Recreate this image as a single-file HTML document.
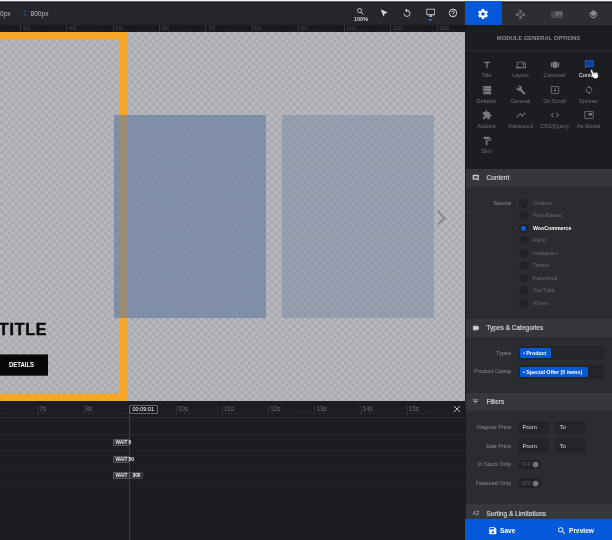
<!DOCTYPE html>
<html lang="en">
<head>
<meta charset="utf-8">
<title>Module General Options</title>
<style>
*{box-sizing:border-box;margin:0;padding:0}
html,body{width:612px;height:540px;overflow:hidden;background:#1c1d21;font-family:"Liberation Sans",sans-serif;}
body{position:relative}
.abs{position:absolute}
#topline{left:0;top:0;width:612px;height:1px;background:#f4f4f5}
#topline2{left:0;top:1px;width:612px;height:2px;background:linear-gradient(#6c6d70 0,#6c6d70 50%,#17181b 50%,#17181b 100%)}
#toolbar{left:0;top:2px;width:465px;height:23px;background:#25262b}
#tabs{left:465px;top:2px;width:147px;height:23px;background:#2c2e34}
#tab1{left:-0.5px;top:0;width:37.5px;height:22.5px;background:#0558d8}
#ruler{left:0;top:25px;width:465px;height:7px;background:#18191d;overflow:hidden}
#canvas{left:0;top:31.5px;width:465px;height:369.5px;overflow:hidden;
 background:#b7b9be}
#timeline{left:0;top:401px;width:465px;height:139px;background:#1c1d21;overflow:hidden}
#panel{left:465px;top:25px;width:147px;height:494px;background:#1c1d21;overflow:hidden}
#bottombar{left:465px;top:519px;width:147px;height:21px;background:#0558d8}
.tbtxt{font-size:6.600px;color:#bdbec1;line-height:8px;white-space:nowrap}
.rl{position:absolute;top:0;height:7px;border-left:1px solid #34363b;font-size:4.5px;line-height:7px;color:#4c4e53;padding-left:1.5px}
.sec{position:absolute;left:0;width:147px;height:18.5px;background:#35373c}
.sec span{position:absolute;left:21.5px;top:4.5px;font-size:6.5px;line-height:9px;color:#cfd0d2;white-space:nowrap;-webkit-text-stroke:0.2px #cfd0d2}
.body{position:absolute;left:0;width:147px;background:#2a2c30}
.lbl{position:absolute;font-size:5.6px;line-height:7px;color:#74767b;white-space:nowrap;text-align:right;right:101px;overflow:hidden;-webkit-text-stroke:0.15px #74767b}
.gi{position:absolute;width:34px;text-align:center;font-size:5.5px;line-height:7px;color:#707277;white-space:nowrap}
.radio{position:absolute;left:54px;width:9px;height:9px;border-radius:50%;background:#202226}
.rt{position:absolute;left:68px;font-size:5.6px;line-height:7px;color:#6a6c71;white-space:nowrap}
.field{position:absolute;background:#232529;border-radius:1.5px}
.tag{position:absolute;background:#0558d8;border-radius:1px;color:#fff;font-size:5.3px;font-weight:bold;line-height:10px;white-space:nowrap;padding-left:3px}
.ftxt{position:absolute;font-size:6.2px;line-height:7px;color:#dedfe1}
.tl-line{position:absolute;left:0;width:465px;height:1px;background:#25262b}
.tl-lab{position:absolute;top:4px;font-size:6.3px;line-height:7px;color:#6e7075}
.tl-tick{position:absolute;top:5px;width:1px;height:9px;background:#303237}
.wait{position:absolute;left:113px;height:7px;width:16.5px;background:#2e3035;border:1px solid #565960;border-radius:1px;color:#e8e8ea;font-weight:bold;font-size:4.8px;line-height:5px;padding-left:1.5px;white-space:nowrap}
.waitn{position:absolute;color:#fff;font-weight:bold;font-size:4.8px;line-height:7px}
</style>
</head>
<body>
<div id="root" style="position:absolute;left:0;top:0;width:612px;height:540px;will-change:transform">
<div class="abs" id="toolbar">
  <div class="abs tbtxt" style="left:0;top:7.5px">0px</div>
  <svg class="abs" style="left:22.500px;top:7px" width="4" height="8" viewBox="0 0 4 8"><path d="M0.600 2.900 L2 1.400 L3.400 2.900 M0.600 5.100 L2 6.600 L3.400 5.100" fill="none" stroke="#2a5fc4" stroke-width="0.900"/></svg>
  <div class="abs tbtxt" style="left:30.5px;top:7.5px">800px</div>
  <!-- zoom -->
  <svg class="abs" style="left:356px;top:5px" width="9" height="9" viewBox="0 0 24 24"><path fill="#d6d7d9" d="M15.5 14h-.79l-.28-.27A6.471 6.471 0 0 0 16 9.5 6.5 6.5 0 1 0 9.500 16c1.610 0 3.090-.590 4.230-1.570l.270.280v.790l5 4.990L20.490 19l-4.990-5zm-6 0C7.010 14 5 11.990 5 9.500S7.010 5 9.500 5 14 7.010 14 9.500 11.990 14 9.500 14z"/></svg>
  <div class="abs" style="left:352px;top:13.5px;width:18px;text-align:center;font-size:5.500px;line-height:6px;font-weight:bold;color:#d6d7d9">100%</div>
  <!-- cursor -->
  <svg class="abs" style="left:379px;top:6px" width="10" height="10" viewBox="0 0 24 24"><path fill="#d6d7d9" d="M4 3 L21 11 L13.500 13.500 L11 21 Z"/></svg>
  <!-- undo -->
  <svg class="abs" style="left:402px;top:5.500px" width="10" height="10" viewBox="0 0 24 24"><path fill="#d6d7d9" d="M12 5V1L7 6l5 5V7c3.310 0 6 2.690 6 6s-2.690 6-6 6-6-2.690-6-6H4c0 4.420 3.580 8 8 8s8-3.580 8-8-3.580-8-8-8z"/></svg>
  <!-- monitor -->
  <svg class="abs" style="left:425.500px;top:6px" width="9.500" height="9.500" viewBox="0 0 24 24"><path fill="#d6d7d9" d="M21 2H3c-1.100 0-2 .900-2 2v12c0 1.100.900 2 2 2h7v2H8v2h8v-2h-2v-2h7c1.100 0 2-.900 2-2V4c0-1.100-.900-2-2-2zm0 14H3V4h18v12z"/></svg>
  <svg class="abs" style="left:428.200px;top:17.300px" width="4.200" height="2.600" viewBox="0 0 5 3"><path d="M0 0H5L2.500 3Z" fill="#2f68d6"/></svg>
  <!-- help -->
  <svg class="abs" style="left:448px;top:6px" width="10" height="10" viewBox="0 0 24 24"><path fill="#d6d7d9" d="M11 18h2v-2h-2v2zm1-16C6.480 2 2 6.480 2 12s4.480 10 10 10 10-4.480 10-10S17.520 2 12 2zm0 18c-4.410 0-8-3.590-8-8s3.590-8 8-8 8 3.590 8 8-3.590 8-8 8zm0-14c-2.210 0-4 1.790-4 4h2c0-1.100.900-2 2-2s2 .900 2 2c0 2-3 1.750-3 5h2c0-2.250 3-2.500 3-5 0-2.210-1.790-4-4-4z"/></svg>
</div>
<div class="abs" id="tabs">
  <div class="abs" id="tab1"></div>
  <!-- gear -->
  <svg class="abs" style="left:12.400px;top:6.300px" width="12" height="12" viewBox="0 0 24 24"><path fill="#fff" d="M19.430 12.980c.040-.320.070-.640.070-.980s-.030-.660-.070-.980l2.110-1.650c.190-.150.240-.420.120-.640l-2-3.460c-.120-.220-.390-.300-.610-.220l-2.490 1c-.520-.400-1.080-.730-1.690-.980l-.380-2.650C14.460 2.180 14.250 2 14 2h-4c-.250 0-.460.180-.490.420l-.380 2.650c-.610.250-1.170.590-1.690.980l-2.490-1c-.230-.090-.490 0-.610.220l-2 3.460c-.130.220-.070.490.120.640l2.110 1.650c-.040.320-.070.650-.070.980s.030.660.070.980l-2.110 1.650c-.190.150-.240.420-.120.640l2 3.460c.120.220.390.300.610.220l2.490-1c.520.400 1.080.730 1.690.980l.380 2.650c.030.240.240.420.490.420h4c.250 0 .460-.180.490-.420l.380-2.650c.610-.250 1.170-.590 1.690-.980l2.490 1c.230.090.490 0 .610-.220l2-3.460c.120-.220.070-.490-.120-.640l-2.110-1.650zM12 15.500c-1.930 0-3.500-1.570-3.500-3.500s1.570-3.500 3.500-3.500 3.500 1.570 3.500 3.500-1.570 3.500-3.500 3.500z"/></svg>
  <!-- move / gamepad -->
  <svg class="abs" style="left:50px;top:7px" width="11" height="11" viewBox="0 0 24 24"><path fill="#66686d" d="M15 7.500V2H9v5.500l3 3 3-3zM7.500 9H2v6h5.500l3-3-3-3zM9 16.500V22h6v-5.500l-3-3-3 3zM16.500 9l-3 3 3 3H22V9h-5.500z"/></svg>
  <!-- slides -->
  <svg class="abs" style="left:86px;top:7px" width="12" height="11" viewBox="0 0 26 24"><path fill="#66686d" d="M1 5h2v14H1zm4 0h2v14H5zm4 0h16v14H9zM11 17h12l-3.500-5-3 4-2-2.500z" fill-rule="evenodd"/></svg>
  <!-- layers -->
  <svg class="abs" style="left:123px;top:7px" width="11" height="11" viewBox="0 0 24 24"><path fill="#8b8d92" d="M11.990 18.540l-7.370-5.730L3 14.070l9 7 9-7-1.630-1.270-7.380 5.740zM12 16l7.360-5.730L21 9l-9-7-9 7 1.630 1.270L12 16z"/></svg>
</div>
<div class="abs" id="ruler">
<div class="rl" style="left:20.0px">300</div>
<div class="rl" style="left:66.3px">400</div>
<div class="rl" style="left:112.6px">500</div>
<div class="rl" style="left:158.9px">600</div>
<div class="rl" style="left:205.2px">700</div>
<div class="rl" style="left:251.5px">800</div>
<div class="rl" style="left:297.8px">900</div>
<div class="rl" style="left:344.1px">1000</div>
<div class="rl" style="left:390.4px">1100</div>
<div class="rl" style="left:436.7px">1200</div>
<svg class="abs" style="left:0;top:0" width="465" height="7"><path d="M-2.65 5V7M1.98 5V7M6.61 5V7M11.24 5V7M15.87 5V7M25.13 5V7M29.76 5V7M34.39 5V7M39.02 5V7M43.65 5V7M48.28 5V7M52.91 5V7M57.54 5V7M62.17 5V7M71.43 5V7M76.06 5V7M80.69 5V7M85.32 5V7M89.95 5V7M94.58 5V7M99.21 5V7M103.84 5V7M108.47 5V7M117.73 5V7M122.36 5V7M126.99 5V7M131.62 5V7M136.25 5V7M140.88 5V7M145.51 5V7M150.14 5V7M154.77 5V7M164.03 5V7M168.66 5V7M173.29 5V7M177.92 5V7M182.55 5V7M187.18 5V7M191.81 5V7M196.44 5V7M201.07 5V7M210.33 5V7M214.96 5V7M219.59 5V7M224.22 5V7M228.85 5V7M233.48 5V7M238.11 5V7M242.74 5V7M247.37 5V7M256.63 5V7M261.26 5V7M265.89 5V7M270.52 5V7M275.15 5V7M279.78 5V7M284.41 5V7M289.04 5V7M293.67 5V7M302.93 5V7M307.56 5V7M312.19 5V7M316.82 5V7M321.45 5V7M326.08 5V7M330.71 5V7M335.34 5V7M339.97 5V7M349.23 5V7M353.86 5V7M358.49 5V7M363.12 5V7M367.75 5V7M372.38 5V7M377.01 5V7M381.64 5V7M386.27 5V7M395.53 5V7M400.16 5V7M404.79 5V7M409.42 5V7M414.05 5V7M418.68 5V7M423.31 5V7M427.94 5V7M432.57 5V7M441.83 5V7M446.46 5V7M451.09 5V7M455.72 5V7M460.35 5V7M464.98 5V7M469.61 5V7M474.24 5V7M478.87 5V7M488.13 5V7M492.76 5V7M497.39 5V7M502.02 5V7M506.65 5V7M511.28 5V7M515.91 5V7M520.54 5V7M525.17 5V7" stroke="#2e3035" stroke-width="0.8" fill="none"/></svg>
</div>
<div class="abs" id="canvas">
  <svg class="abs" style="left:0;top:0" width="465" height="370"><defs><pattern id="ck" width="7.4" height="7.4" patternUnits="userSpaceOnUse"><rect x="0" y="0" width="3.7" height="3.7" fill="#a9abb0"/><rect x="3.7" y="3.7" width="3.7" height="3.7" fill="#a9abb0"/></pattern></defs><rect x="0" y="0" width="465" height="370" fill="url(#ck)"/></svg>
  <!-- orange frame -->
  <div class="abs" style="left:-20px;top:-1px;width:148px;height:371.500px;border:1px solid rgba(246,165,36,.4)"></div>
  <div class="abs" style="left:-20px;top:7px;width:140px;height:355.500px;border:1.500px solid rgba(246,165,36,.4)"></div>
  <div class="abs" style="left:-20px;top:0;width:147px;height:369.500px;border:7px solid #f6a524"></div>
  <div class="abs" style="left:114px;top:83.500px;width:152px;height:202.500px;background:rgba(113,132,164,.76)"></div>
  <div class="abs" style="left:120px;top:83.500px;width:7px;height:202.500px;background:#9a8b73"></div>
  <div class="abs" style="left:282px;top:83.500px;width:152px;height:202.500px;background:rgba(115,132,162,.45)"></div>
  <svg class="abs" style="left:436px;top:178px" width="11" height="16" viewBox="0 0 11 16"><path d="M1.600 1.200 L8.600 7.900 L1.600 14.600" fill="none" stroke="#808287" stroke-width="1.700"/></svg>
  <div class="abs" style="left:-1.200px;top:288px;font-size:16px;line-height:20px;font-weight:bold;color:#0a0a0a;letter-spacing:0.800px;-webkit-text-stroke:0.500px #0a0a0a">TITLE</div>
  <svg class="abs" style="left:0;top:322.500px" width="50" height="24"><rect x="-2" y="0.400" width="50" height="21.300" fill="#070707"/></svg>
  <div class="abs" style="left:0;top:322.500px;width:48px;height:20.500px;color:#fff;font-size:6px;font-weight:bold;line-height:20.500px;text-align:center;padding-right:5px;transform:scale(1,1.3);transform-origin:50% 50%">DETAILS</div>
</div>
<div class="abs" id="timeline">
<svg class="abs" style="left:0;top:0" width="465" height="16"><path d="M-8.65 11.5V13M-4.04 11.5V13M0.58 11.5V13M5.20 11.5V13M9.81 11.5V13M14.42 11.5V13M19.04 11.5V13M23.66 11.5V13M28.27 11.5V13M32.88 11.5V13M37.50 11.5V13M42.12 11.5V13M46.73 11.5V13M51.34 11.5V13M55.96 11.5V13M60.58 11.5V13M65.19 11.5V13M69.81 11.5V13M74.42 11.5V13M79.03 11.5V13M83.65 11.5V13M88.27 11.5V13M92.88 11.5V13M97.50 11.5V13M102.11 11.5V13M106.73 11.5V13M111.34 11.5V13M115.95 11.5V13M120.57 11.5V13M125.19 11.5V13M129.80 11.5V13M134.42 11.5V13M139.03 11.5V13M143.65 11.5V13M148.26 11.5V13M152.88 11.5V13M157.49 11.5V13M162.11 11.5V13M166.72 11.5V13M171.34 11.5V13M175.95 11.5V13M180.56 11.5V13M185.18 11.5V13M189.80 11.5V13M194.41 11.5V13M199.03 11.5V13M203.64 11.5V13M208.25 11.5V13M212.87 11.5V13M217.49 11.5V13M222.10 11.5V13M226.72 11.5V13M231.33 11.5V13M235.95 11.5V13M240.56 11.5V13M245.18 11.5V13M249.79 11.5V13M254.41 11.5V13M259.02 11.5V13M263.63 11.5V13M268.25 11.5V13M272.87 11.5V13M277.48 11.5V13M282.10 11.5V13M286.71 11.5V13M291.33 11.5V13M295.94 11.5V13M300.56 11.5V13M305.17 11.5V13M309.79 11.5V13M314.40 11.5V13M319.01 11.5V13M323.63 11.5V13M328.25 11.5V13M332.86 11.5V13M337.48 11.5V13M342.09 11.5V13M346.71 11.5V13M351.32 11.5V13M355.94 11.5V13M360.55 11.5V13M365.17 11.5V13M369.78 11.5V13M374.40 11.5V13M379.01 11.5V13M383.62 11.5V13M388.24 11.5V13M392.86 11.5V13M397.47 11.5V13M402.09 11.5V13M406.70 11.5V13M411.31 11.5V13M415.93 11.5V13M420.55 11.5V13M425.16 11.5V13M429.78 11.5V13M434.39 11.5V13M439.00 11.5V13M443.62 11.5V13M448.24 11.5V13M452.85 11.5V13M457.47 11.5V13M462.08 11.5V13M466.69 11.5V13M471.31 11.5V13M475.93 11.5V13M480.54 11.5V13M485.16 11.5V13M489.77 11.5V13M494.39 11.5V13" stroke="#3d3f44" stroke-width="0.8" fill="none"/></svg>
<div class="tl-tick" style="left:37.5px"></div><div class="tl-lab" style="left:39.5px">7s</div>
<div class="tl-tick" style="left:83.7px"></div><div class="tl-lab" style="left:85.7px">8s</div>
<div class="tl-tick" style="left:175.9px"></div><div class="tl-lab" style="left:177.9px">10s</div>
<div class="tl-tick" style="left:222.1px"></div><div class="tl-lab" style="left:224.1px">11s</div>
<div class="tl-tick" style="left:268.2px"></div><div class="tl-lab" style="left:270.2px">12s</div>
<div class="tl-tick" style="left:314.4px"></div><div class="tl-lab" style="left:316.4px">13s</div>
<div class="tl-tick" style="left:360.6px"></div><div class="tl-lab" style="left:362.6px">14s</div>
<div class="tl-tick" style="left:406.7px"></div><div class="tl-lab" style="left:408.7px">15s</div>
<div class="tl-line" style="top:16px;background:#2b2c31"></div>
<div class="tl-line" style="top:32.7px"></div>
<div class="tl-line" style="top:49.3px"></div>
<div class="tl-line" style="top:66px"></div>
<div class="tl-line" style="top:82.7px"></div>
<div class="abs" style="left:129px;top:12px;width:1px;height:127px;background:#393b40"></div>
<div class="abs" style="left:129px;top:4px;width:28.500px;height:9px;border:1px solid #63656a;background:#1c1d21;border-radius:1px;color:#fff;font-size:5.500px;line-height:7px;text-align:center">00:09:01</div>
<div class="wait" style="top:38.200px">WAIT</div><div class="waitn" style="left:128.500px;top:38.200px">0</div>
<div class="wait" style="top:54.700px">WAIT</div><div class="waitn" style="left:128.500px;top:54.700px">50</div>
<div class="wait" style="top:71.200px;width:30px;background:#2a2c31;border-color:#44474e"></div><div class="wait" style="top:71.200px">WAIT</div><div class="waitn" style="left:132.500px;top:71.200px">300</div>
<svg class="abs" style="left:453px;top:4px" width="8" height="8" viewBox="0 0 8 8"><path d="M1 1L7 7M7 1L1 7" stroke="#bfc0c3" stroke-width="1" fill="none"/></svg>
</div>
<div class="abs" id="panel">
<div class="abs" style="left:0;top:6px;width:147px;text-align:center;font-size:5.85px;line-height:14px;font-weight:bold;color:#8a8c91">MODULE GENERAL OPTIONS</div>
<div class="abs" style="left:0;top:25px;width:147px;height:1px;background:#2a2b30"></div>
<svg class="abs" style="left:16.5px;top:34.5px" width="10" height="10" viewBox="0 0 24 24"><path fill="#787a7f" d="M5 4v3h5.500v12h3V7H19V4z"/></svg>
<div class="gi" style="left:4.5px;top:47.0px">Title</div>
<svg class="abs" style="left:50.5px;top:34.5px" width="10" height="10" viewBox="0 0 24 24"><path fill="#787a7f" d="M4 6h18V4H4c-1.100 0-2 .900-2 2v11H0v3h14v-3H4V6zm19 2h-6c-.550 0-1 .450-1 1v10c0 .550.450 1 1 1h6c.550 0 1-.450 1-1V9c0-.550-.450-1-1-1zm-1 9h-4v-7h4v7z"/></svg>
<div class="gi" style="left:38.5px;top:47.0px">Layout</div>
<svg class="abs" style="left:84.5px;top:34.5px" width="10" height="10" viewBox="0 0 24 24"><path fill="#787a7f" d="M7 19h10V4H7v15zm-5-2h4V6H2v11zM18 6v11h4V6h-4z"/></svg>
<div class="gi" style="left:72.5px;top:47.0px">Carousel</div>
<svg class="abs" style="left:118.9px;top:33.7px" width="10.6" height="10.6" viewBox="0 0 24 24"><path fill="#0b3f96" d="M3 3h18v14H6l-3 3z"/><path fill="#0e5fe0" d="M20 2H4c-1.100 0-2 .900-2 2v18l4-4h14c1.100 0 2-.900 2-2V4c0-1.100-.900-2-2-2zm0 14H6l-2 2V4h16v12z"/></svg>
<div class="gi" style="left:106.5px;top:47.0px;color:#fff">Content</div>
<svg class="abs" style="left:16.5px;top:60.0px" width="10" height="10" viewBox="0 0 24 24"><path fill="#787a7f" fill-rule="evenodd" d="M3 2.500h18a1 1 0 0 1 1 1v4a1 1 0 0 1-1 1H3a1 1 0 0 1-1-1v-4a1 1 0 0 1 1-1zM4 4.500v2h2.500v-2zM3 9.200h18a1 1 0 0 1 1 1v4a1 1 0 0 1-1 1H3a1 1 0 0 1-1-1v-4a1 1 0 0 1 1-1zM4 11.200v2h2.500v-2zM3 15.900h18a1 1 0 0 1 1 1v4a1 1 0 0 1-1 1H3a1 1 0 0 1-1-1v-4a1 1 0 0 1 1-1zM4 17.900v2h2.500v-2z"/></svg>
<div class="gi" style="left:4.5px;top:72.5px">Defaults</div>
<svg class="abs" style="left:50.5px;top:60.0px" width="10" height="10" viewBox="0 0 24 24"><path fill="#787a7f" d="M22.700 19l-9.100-9.100c.900-2.300.400-5-1.500-6.900-2-2-5-2.400-7.400-1.300L9 6 6 9 1.600 4.700C.400 7.100.900 10.100 2.900 12.100c1.900 1.900 4.600 2.400 6.900 1.500l9.100 9.100c.400.400 1 .400 1.400 0l2.300-2.300c.500-.400.500-1.100.100-1.400z"/></svg>
<div class="gi" style="left:38.5px;top:72.5px">General</div>
<svg class="abs" style="left:84.5px;top:60.0px" width="10" height="10" viewBox="0 0 24 24"><path fill="#787a7f" d="M20 3H4c-1.100 0-2 .900-2 2v14c0 1.100.900 2 2 2h16c1.100 0 2-.900 2-2V5c0-1.100-.900-2-2-2zm0 16H4V5h16v14zM13 7h-2v5H8l4 4 4-4h-3z"/></svg>
<div class="gi" style="left:72.5px;top:72.5px">On Scroll</div>
<svg class="abs" style="left:118.5px;top:60.0px" width="10" height="10" viewBox="0 0 24 24"><path fill="#787a7f" d="M12 4V1L8 5l4 4V6c3.310 0 6 2.690 6 6 0 1.010-.250 1.970-.700 2.800l1.460 1.460C19.540 15.030 20 13.570 20 12c0-4.420-3.580-8-8-8zm0 14c-3.310 0-6-2.690-6-6 0-1.010.250-1.970.700-2.800L5.240 7.740C4.460 8.970 4 10.430 4 12c0 4.420 3.580 8 8 8v3l4-4-4-4v3z"/></svg>
<div class="gi" style="left:106.5px;top:72.5px">Spinner</div>
<svg class="abs" style="left:16.5px;top:85.3px" width="10" height="10" viewBox="0 0 24 24"><path fill="#787a7f" d="M20.500 11H19V7c0-1.100-.900-2-2-2h-4V3.500C13 2.120 11.880 1 10.500 1S8 2.120 8 3.500V5H4c-1.100 0-1.990.900-1.990 2v3.800H3.500c1.490 0 2.700 1.210 2.700 2.700s-1.210 2.700-2.700 2.700H2V20c0 1.100.900 2 2 2h3.800v-1.500c0-1.490 1.210-2.700 2.700-2.700 1.490 0 2.700 1.210 2.700 2.700V22H17c1.100 0 2-.900 2-2v-4h1.500c1.380 0 2.500-1.120 2.500-2.500S21.880 11 20.500 11z"/></svg>
<div class="gi" style="left:4.5px;top:97.8px">Addons</div>
<svg class="abs" style="left:50.5px;top:85.3px" width="10" height="10" viewBox="0 0 24 24"><path fill="#787a7f" d="M23 8c0 1.100-.900 2-2 2-.180 0-.350-.020-.510-.070l-3.560 3.550c.050.160.070.340.070.520 0 1.100-.900 2-2 2s-2-.900-2-2c0-.180.020-.360.070-.520l-2.550-2.550c-.160.050-.340.070-.520.070s-.360-.020-.520-.070l-4.550 4.560c.050.160.070.330.070.510 0 1.100-.900 2-2 2s-2-.900-2-2 .900-2 2-2c.180 0 .350.020.510.070l4.560-4.550C8.020 9.360 8 9.180 8 9c0-1.100.900-2 2-2s2 .900 2 2c0 .180-.020.360-.070.520l2.550 2.550c.160-.050.340-.070.520-.070s.360.020.520.070l3.550-3.560C19.020 8.350 19 8.180 19 8c0-1.100.900-2 2-2s2 .900 2 2z"/></svg>
<div class="gi" style="left:38.5px;top:97.8px">Advanced</div>
<svg class="abs" style="left:84.5px;top:85.3px" width="10" height="10" viewBox="0 0 24 24"><path fill="#787a7f" d="M9.400 16.600L4.800 12l4.600-4.600L8 6l-6 6 6 6 1.400-1.400zm5.200 0l4.600-4.600-4.600-4.600L16 6l6 6-6 6-1.400-1.400z"/></svg>
<div class="gi" style="left:72.5px;top:97.8px">CSS/jQuery</div>
<svg class="abs" style="left:118.5px;top:85.3px" width="10" height="10" viewBox="0 0 24 24"><path fill="#787a7f" d="M19 7h-8v6h8V7zm2-4H3c-1.100 0-2 .900-2 2v14c0 1.100.900 1.980 2 1.980h18c1.100 0 2-.880 2-1.980V5c0-1.100-.900-2-2-2zm0 16.010H3V4.980h18v14.030z"/></svg>
<div class="gi" style="left:106.5px;top:97.8px">As Modal</div>
<svg class="abs" style="left:16.5px;top:110.7px" width="10" height="10" viewBox="0 0 24 24"><path fill="#787a7f" d="M18 4V3c0-.550-.450-1-1-1H5c-.550 0-1 .450-1 1v4c0 .550.450 1 1 1h12c.550 0 1-.450 1-1V6h1v4H9v11c0 .550.450 1 1 1h2c.550 0 1-.450 1-1v-9h8V4h-3z"/></svg>
<div class="gi" style="left:4.5px;top:123.0px">Skin</div>
<svg class="abs" style="left:124.89999999999998px;top:42.599999999999994px;transform:rotate(-18deg)" width="9.500" height="11.400" viewBox="0 0 20 24"><path d="M5.500 1.200C6.900 1.200 7.800 2.200 7.800 3.500V9.300C8.500 8.600 10.300 8.700 10.700 9.900C11.400 9.100 13.200 9.300 13.500 10.500C14.400 9.900 16.300 10.200 16.300 11.800V16.500C16.300 20.200 14.200 22.800 11.200 22.800H9.600C7.500 22.800 6.100 21.800 5.100 20L1.600 14.300C.900 13 2.400 11.900 3.300 12.900V3.500C3.300 2.200 4.200 1.200 5.500 1.200Z" fill="#fff" stroke="#1a1a1c" stroke-width="1.100"/><path d="M7.800 9.500V13M10.700 10V13M13.500 10.700V13" stroke="#444" stroke-width=".900" fill="none"/></svg>
<div class="sec" style="top:143.5px"><svg class="abs" style="left:7px;top:5.200px" width="7.500" height="7.500" viewBox="0 0 24 24"><path fill="#c9cacc" d="M21.990 4c0-1.100-.890-2-1.990-2H4c-1.100 0-2 .900-2 2v12c0 1.100.900 2 2 2h14l4 4-.010-18zM18 14H6v-2h12v2zm0-3H6V9h12v2zm0-3H6V6h12v2z"/></svg><span>Content</span></div>
<div class="body" style="top:162px;height:131.5px"></div>
<div class="lbl" style="top:174.5px">Source</div>
<div class="radio" style="top:173.5px"></div>
<div class="rt" style="top:174.5px">Custom</div>
<div class="radio" style="top:186.0px"></div>
<div class="rt" style="top:187.0px">Post-Based</div>
<div class="radio" style="top:198.5px"></div>
<div class="abs" style="left:56px;top:200.5px;width:5px;height:5px;border-radius:50%;background:#0e5fe0"></div>
<div class="rt" style="top:199.5px;color:#fff;font-weight:bold;font-size:5.25px">WooCommerce</div>
<div class="radio" style="top:211.0px"></div>
<div class="rt" style="top:212.0px">Flickr</div>
<div class="radio" style="top:223.5px"></div>
<div class="rt" style="top:224.5px">Instagram</div>
<div class="radio" style="top:236.0px"></div>
<div class="rt" style="top:237.0px">Twitter</div>
<div class="radio" style="top:248.5px"></div>
<div class="rt" style="top:249.5px">Facebook</div>
<div class="radio" style="top:261.0px"></div>
<div class="rt" style="top:262.0px">YouTube</div>
<div class="radio" style="top:273.5px"></div>
<div class="rt" style="top:274.5px">Vimeo</div>
<div class="sec" style="top:293.5px"><svg class="abs" style="left:6.800px;top:5px" width="8" height="8" viewBox="0 0 24 24"><path fill="#c9cacc" d="M17.630 5.840C17.270 5.330 16.670 5 16 5L5 5.010C3.900 5.010 3 5.900 3 7v10c0 1.100.900 1.990 2 1.990L16 19c.670 0 1.270-.330 1.630-.840L22 12l-4.370-6.160z"/></svg><span>Types &amp; Categories</span></div>
<div class="body" style="top:312px;height:55.5px"></div>
<div class="lbl" style="top:324.5px">Types</div>
<div class="field" style="left:53.5px;top:321px;width:85px;height:14px"></div>
<div class="tag" style="left:55px;top:323px;width:31px;height:10px">&bull; Product</div>
<div class="lbl" style="top:343.0px;width:37px;text-align:left">Product Categories</div>
<div class="field" style="left:53.5px;top:340px;width:85px;height:14px"></div>
<div class="tag" style="left:55px;top:342px;width:67.500px;height:10px">&bull; Special Offer (5 items)</div>
<div class="sec" style="top:367.5px"><svg class="abs" style="left:7.200px;top:5.800px" width="7" height="7" viewBox="0 0 24 24"><path fill="#b4b6bb" d="M9.500 19h5v-3h-5v3zM2 5v3h20V5H2zm3.500 8.500h13v-3h-13v3z"/></svg><span>Filters</span></div>
<div class="body" style="top:386px;height:92.69999999999999px"></div>
<div class="lbl" style="top:399.0px">Regular Price</div>
<div class="field" style="left:53px;top:395.5px;width:31px;height:13.500px"></div><div class="ftxt" style="left:57.5px;top:398.2px">From</div>
<div class="field" style="left:90px;top:395.5px;width:31px;height:13.500px"></div><div class="ftxt" style="left:94.5px;top:398.2px">To</div>
<div class="lbl" style="top:417.5px">Sale Price</div>
<div class="field" style="left:53px;top:414px;width:31px;height:13.500px"></div><div class="ftxt" style="left:57.5px;top:416.7px">From</div>
<div class="field" style="left:90px;top:414px;width:31px;height:13.500px"></div><div class="ftxt" style="left:94.5px;top:416.7px">To</div>
<div class="lbl" style="top:436.0px">In Stock Only</div>
<div class="abs" style="left:53px;top:434.75px;width:22.500px;height:9.500px;border-radius:5px;background:#212327"></div>
<div class="abs" style="left:56.5px;top:436.0px;font-size:4.6px;line-height:7px;color:#5a5c61">OFF</div>
<svg class="abs" style="left:66px;top:435.0px" width="9" height="9"><circle cx="4.600" cy="4.600" r="2.800" fill="#74767b"/></svg>
<div class="lbl" style="top:454.5px">Featured Only</div>
<div class="abs" style="left:53px;top:453.25px;width:22.500px;height:9.500px;border-radius:5px;background:#212327"></div>
<div class="abs" style="left:56.5px;top:454.5px;font-size:4.6px;line-height:7px;color:#5a5c61">OFF</div>
<svg class="abs" style="left:66px;top:453.5px" width="9" height="9"><circle cx="4.600" cy="4.600" r="2.800" fill="#74767b"/></svg>
<div class="sec" style="top:478.7px"><svg class="abs" style="left:6.500px;top:5.500px" width="8" height="8" viewBox="0 0 24 24"><path fill="#a4a6ab" d="M14.940 4.660h-4.720l2.360-2.360zm-4.690 14.710h4.660l-2.330 2.330zM6.100 6.270L1.600 17.730h1.840l.920-2.450h5.110l.920 2.450h1.840L7.740 6.270H6.100zm-1.130 7.370l1.940-5.180 1.940 5.180H4.970zm10.760 2.500h6.120v1.590h-8.530v-1.290l5.920-8.560h-5.880v-1.600h8.300v1.260l-5.930 8.600z"/></svg><span style="top:5.2px">Sorting &amp; Limitations</span></div>
<div class="abs" id="panel-edge" style="left:0;top:0;width:1px;height:494px;background:rgba(18,19,22,.6)"></div>
</div>
<div class="abs" id="bottombar">
<svg class="abs" style="left:23px;top:6.500px" width="9.500" height="9.500" viewBox="0 0 24 24"><path fill="#fff" d="M17 3H5c-1.110 0-2 .900-2 2v14c0 1.100.890 2 2 2h14c1.100 0 2-.900 2-2V7l-4-4zm-5 16c-1.660 0-3-1.340-3-3s1.340-3 3-3 3 1.340 3 3-1.340 3-3 3zm3-10H5V5h10v4z"/></svg><div class="abs" style="left:35px;top:7px;font-size:6.6px;line-height:9px;font-weight:bold;color:#fff">Save</div><svg class="abs" style="left:92px;top:6.500px" width="9.500" height="9.500" viewBox="0 0 24 24"><path fill="#fff" d="M15.500 14h-.79l-.28-.27A6.471 6.471 0 0 0 16 9.500 6.500 6.500 0 1 0 9.500 16c1.610 0 3.090-.590 4.230-1.570l.270.280v.790l5 4.990L20.490 19l-4.990-5zm-6 0C7.010 14 5 11.990 5 9.500S7.010 5 9.500 5 14 7.010 14 9.500 11.990 14 9.500 14z"/></svg><div class="abs" style="left:104px;top:7px;font-size:6.6px;line-height:9px;font-weight:bold;color:#fff">Preview</div>
</div>
<div class="abs" id="topline"></div>
<div class="abs" id="topline2"></div>
<div class="abs" style="left:464.500px;top:1.300px;width:37.500px;height:2px;background:#0558d8"></div>
</div>
</body>
</html>
